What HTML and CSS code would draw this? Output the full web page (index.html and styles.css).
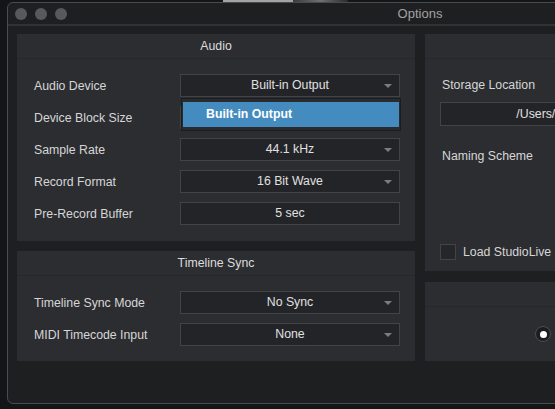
FILE: index.html
```html
<!DOCTYPE html>
<html>
<head>
    <title>Options</title>
    <link rel="stylesheet" href="styles.css">
</head>
<body>
    <div class="desk-edge"><span class="behind"></span><span class="behind-fade"></span></div>

    <div class="window">
        <div class="titlebar">
            <div class="lights">
                <span class="light"></span>
                <span class="light"></span>
                <span class="light"></span>
            </div>
            <div class="title">Options</div>
        </div>

        <div class="content">
            <div class="column">
                <div class="panel audio">
                    <div class="panel-head">Audio</div>
                    <div class="panel-body">
                        <div class="row">
                            <label>Audio Device</label>
                            <div class="select">
                                Built-in Output
                                <span class="arrow"></span>
                                <div class="menu">
                                    <div class="menu-item">Built-in Output</div>
                                </div>
                            </div>
                        </div>
                        <div class="row">
                            <label>Device Block Size</label>
                            <!-- covered by the open Audio Device menu -->
                            <div class="select"></div>
                        </div>
                        <div class="row">
                            <label>Sample Rate</label>
                            <div class="select">44.1 kHz<span class="arrow"></span></div>
                        </div>
                        <div class="row">
                            <label>Record Format</label>
                            <div class="select">16 Bit Wave<span class="arrow"></span></div>
                        </div>
                        <div class="row">
                            <label>Pre-Record Buffer</label>
                            <div class="select">5 sec</div>
                        </div>
                    </div>
                </div>

                <div class="panel sync">
                    <div class="panel-head">Timeline Sync</div>
                    <div class="panel-body">
                        <div class="row">
                            <label>Timeline Sync Mode</label>
                            <div class="select">No Sync<span class="arrow"></span></div>
                        </div>
                        <div class="row">
                            <label>MIDI Timecode Input</label>
                            <div class="select">None<span class="arrow"></span></div>
                        </div>
                    </div>
                </div>
            </div>

            <div class="column">
                <div class="panel storage">
                    <div class="panel-head"></div>
                    <div class="panel-body">
                        <div class="field-label">Storage Location</div>
                        <div class="path-box">/Users/Shared/StudioLive Recordings 1</div>
                        <div class="field-label naming">Naming Scheme</div>
                        <div class="check-row">
                            <span class="checkbox"></span>
                            <span>Load StudioLive Scenes</span>
                        </div>
                    </div>
                </div>

                <div class="panel mode">
                    <div class="panel-head"></div>
                    <div class="radio-row">
                        <span class="radio"><span class="dot"></span></span>
                    </div>
                </div>
            </div>
        </div>
    </div>
</body>
</html>
```

FILE: styles.css
```css
body {
    margin: 0;
    background-color: #141516;
    font-family: "Liberation Sans", Arial, sans-serif;
    font-size: 12.3px;
    color: #d6d6d6;
    overflow: hidden;
    width: 555px;
    height: 409px;
}
.desk-edge {
    height: 2px;
    display: flex;
}
.behind {
    margin-left: 223px;
    width: 70px;
    background-color: #a3a3a3;
}
.behind-fade {
    width: 55px;
    background: linear-gradient(to right, #3a3a3a, #707070, #2a2a2a);
}
.window {
    margin-left: 7px;
    width: 824px;
    height: 400px;
    border: 1px solid #4a4b4e;
    border-radius: 6px;
    background-color: #1e1f21;
    overflow: hidden;
}
.titlebar {
    height: 21px;
    display: flex;
    align-items: center;
    border-bottom: 2px solid #313235;
    position: relative;
}
.lights {
    display: flex;
    gap: 8px;
    margin-left: 7px;
}
.light {
    width: 12px;
    height: 12px;
    border-radius: 50%;
    background-color: #58595c;
}
.title {
    position: absolute;
    left: 0;
    right: 0;
    text-align: center;
    font-size: 13px;
    color: #a2a2a2;
}
.content {
    display: flex;
    gap: 10px;
    padding: 8px 9px 0 9px;
}
.column {
    width: 398px;
    display: flex;
    flex-direction: column;
    gap: 10px;
}
.column + .column {
    gap: 11px;
}
.panel {
    background-color: #2c2d31;
}
.panel-head {
    height: 24px;
    line-height: 24px;
    text-align: center;
    color: #dcdcdc;
    border-bottom: 1px solid #26272a;
}
.panel-body {
    padding: 15px 15px 15px 17px;
    display: flex;
    flex-direction: column;
    gap: 9px;
}
.row {
    display: flex;
    align-items: center;
}
.row label {
    width: 146px;
}
.select {
    position: relative;
    width: 218px;
    height: 21px;
    line-height: 21px;
    text-align: center;
    color: #e0e0e0;
    background-color: #232427;
    border: 1px solid #424347;
}
.arrow {
    position: absolute;
    right: 7px;
    top: 9px;
    width: 0;
    height: 0;
    border-left: 4px solid transparent;
    border-right: 4px solid transparent;
    border-top: 4px solid #7c7c7e;
}
.menu {
    position: absolute;
    top: 23px;
    left: 0;
    width: 216px;
    padding: 3px 1px;
    background-color: #2a2b2e;
    border: 1px solid #1b1c1e;
    z-index: 2;
}
.menu-item {
    height: 25px;
    line-height: 25px;
    text-align: left;
    padding-left: 23px;
    background-color: #448cc0;
    color: #ffffff;
    font-weight: bold;
}
.panel.audio {
    height: 207px;
}
.panel.sync {
    height: 110px;
}
.panel.storage {
    height: 237px;
}
.panel.storage .panel-body {
    padding: 15px 15px 0 15px;
    gap: 0;
}
.field-label {
    height: 23px;
    line-height: 23px;
    padding-left: 2px;
}
.path-box {
    margin-top: 5px;
    height: 22px;
    line-height: 22px;
    text-align: center;
    white-space: nowrap;
    background-color: #232427;
    border: 1px solid #424347;
    color: #e0e0e0;
}
.field-label.naming {
    margin-top: 19px;
}
.check-row {
    margin-top: 72px;
    display: flex;
    align-items: center;
    gap: 7px;
    height: 23px;
    white-space: nowrap;
}
.checkbox {
    flex: none;
    width: 14px;
    height: 14px;
    background-color: #252629;
    border: 1px solid #434448;
}
.panel.mode {
    height: 79px;
}
.radio-row {
    height: 54px;
    display: flex;
    align-items: center;
    padding-left: 110px;
}
.radio {
    width: 14px;
    height: 14px;
    border-radius: 50%;
    background-color: #1c1d1f;
    border: 1px solid #4d4e52;
    display: flex;
    align-items: center;
    justify-content: center;
}
.dot {
    width: 7px;
    height: 7px;
    border-radius: 50%;
    background-color: #ffffff;
}
```
